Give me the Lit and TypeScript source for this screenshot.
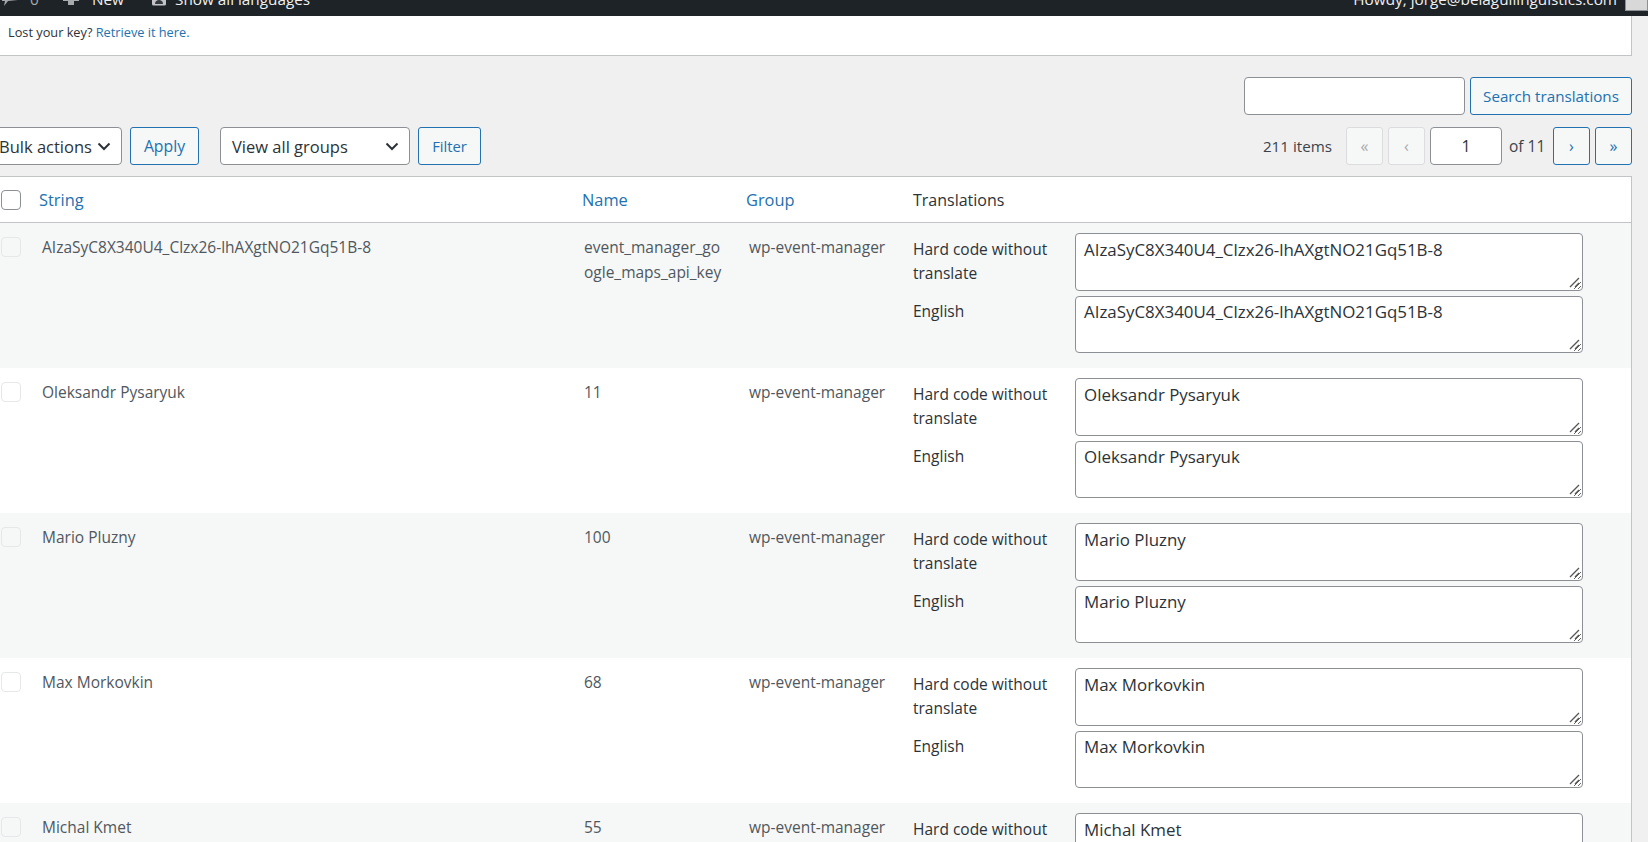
import { LitElement, html, css } from "lit";
import { customElement } from "lit/decorators.js";

const rows = [
  { s: "AIzaSyC8X340U4_Clzx26-lhAXgtNO21Gq51B-8", n: "event_manager_google_maps_api_key" },
  { s: "Oleksandr Pysaryuk", n: "11" },
  { s: "Mario Pluzny", n: "100" },
  { s: "Max Morkovkin", n: "68" },
  { s: "Michal Kmet", n: "55" },
];

@customElement("app-root")
export class AppRoot extends LitElement {
  static styles = css`
    :host {
      display: block;
      height: 842px;
      overflow: hidden;
      background: #f0f0f1;
      color: #3c434a;
      font-family: "Open Sans", "Noto Sans", sans-serif;
      font-size: 15.5px;
    }
    * { box-sizing: border-box; }
    .bar {
      height: 16px;
      background: #1d2327;
      color: #f0f0f1;
      overflow: hidden;
      display: flex;
      align-items: flex-end;
      justify-content: space-between;
      font-size: 15.3px;
      line-height: 20px;
    }
    .bar-group { display: flex; align-items: flex-end; height: 20px; flex: none; margin-bottom: 7px; }
    .bar-ico { flex: none; fill: #a7aaad; }
    .count { color: #a7aaad; margin-left: 10px; width: 31px; }
    .new { margin-left: 11px; width: 57px; }
    .lang { margin-left: 6px; }
    .howdy { margin-right: 8px; }
    .avatar { width: 23px; height: 20px; background: #d8d8d8; border: 1px solid #8c8f94; flex: none; margin-bottom: -2px; }
    .main { width: 1632px; }
    .notice {
      height: 40px;
      background: #fff;
      border-bottom: 1px solid #c3c4c7;
      border-right: 1px solid #c3c4c7;
      padding: 0 8px;
      font-size: 12.75px;
      line-height: 33px;
      color: #2c3338;
    }
    a { color: #2271b1; text-decoration: none; }
    .search { display: flex; justify-content: flex-end; gap: 5px; margin-top: 21px; height: 38px; }
    .input {
      background: #fff;
      border: 1px solid #8c8f94;
      border-radius: 4px;
      height: 38px;
    }
    .search .input { width: 221px; }
    .btn {
      height: 38px;
      border: 1px solid #2271b1;
      border-radius: 3px;
      background: #f6f7f7;
      color: #2271b1;
      display: flex;
      align-items: center;
      justify-content: center;
      flex: none;
    }
    .btn.search-btn { width: 162px; font-size: 15.2px; }
    .btn.apply { font-size: 15.8px; }
    .btn.small { font-size: 14.8px; }
    .nav { display: flex; align-items: center; height: 38px; margin-top: 12px; }
    .select {
      height: 38px;
      background: #fff;
      border: 1px solid #8c8f94;
      border-radius: 4px;
      color: #2c3338;
      font-size: 16.5px;
      display: flex;
      align-items: center;
      justify-content: space-between;
      padding: 0 10px;
      flex: none;
    }
    .select svg { flex: none; }
    .bulk { width: 133px; margin-left: -11px; padding-left: 9px; }
    .apply { width: 69px; margin-left: 8px; }
    .group { width: 190px; margin-left: 21px; padding-left: 11px; }
    .filter { width: 63px; margin-left: 8px; }
    .spacer { flex: 1; }
    .items { margin-right: 14px; font-size: 15.2px; }
    .page {
      width: 37px;
      font-size: 16px;
      margin-left: 5px;
    }
    .page.off { border-color: #dcdcde; color: #a7aaad; background: #f6f7f7; margin-left: 0; }
    .page.off + .page.off { margin-left: 5px; }
    .num {
      width: 72px;
      margin-left: 5px;
      display: flex;
      align-items: center;
      justify-content: center;
      color: #2c3338;
      font-size: 16px;
    }
    .of { margin: 0 4px 0 7px; width: 35px; white-space: nowrap; }
    .table {
      margin-top: 11px;
      background: #fff;
      border: 1px solid #c3c4c7;
      border-left: 0;
    }
    .row {
      display: grid;
      grid-template-columns: 39px 543px 164px 167px 1fr;
    }
    .head {
      height: 46px;
      border-bottom: 1px solid #c3c4c7;
      align-items: center;
      font-size: 16.4px;
    }
    .head .plain { color: #2c3338; font-size: 16px; }
    .cb {
      width: 20px;
      height: 20px;
      margin-left: 1px;
      background: #fff;
      border: 1px solid #8c8f94;
      border-radius: 4px;
    }
    .item { height: 145px; padding-top: 12px; line-height: 25px; color: #50575e; }
    .item:nth-child(even) { background: #f6f7f7; }
    .item .cb { border-color: #e6e7e8; background: transparent; margin-top: 2px; }
    .str { padding-left: 3px; white-space: nowrap; }
    .name { padding-left: 2px; padding-right: 22px; overflow-wrap: anywhere; }
    .grp { padding-left: 3px; white-space: nowrap; }
    .tr { padding-right: 48px; margin-top: -2px; }
    .tr-row { display: grid; grid-template-columns: 162px 1fr; }
    .tr-row + .tr-row { margin-top: 5px; }
    .tr-row label { padding-top: 4px; line-height: 24px; color: #2c3338; }
    .tr-row + .tr-row label { padding-top: 3px; }
    .ta-wrap { position: relative; }
    .ta {
      display: block;
      width: 100%;
      height: 58px;
      resize: vertical;
      font: 16.9px/24px "Open Sans", "Noto Sans", sans-serif;
      color: #2c3338;
      background: #fff;
      border: 1px solid #8c8f94;
      border-radius: 4px;
      padding: 4px 8px 2px;
      margin: 0;
      overflow: hidden;
    }
    .tr-row + .tr-row .ta { height: 57px; padding-top: 3px; }
    .grip { position: absolute; right: 3px; bottom: 3px; pointer-events: none; }
  `;

  render() {
    const chev = html`<svg width="14" height="14" viewBox="0 0 14 14"><path d="M1.5 4.5 7 10l5.5-5.5" fill="none" stroke="#2c3338" stroke-width="2"/></svg>`;
    const grip = html`<svg class="grip" width="11" height="11" viewBox="0 0 11 11"><path d="M1 10 10 1M6 10l4-4" stroke="#555" stroke-width="1.3" fill="none"/></svg>`;
    return html`
      <div class="bar">
        <div class="bar-group">
          <svg class="bar-ico" width="20" height="20" viewBox="0 0 20 20"><path d="M2 3h16v8l-10 1-4 5 1-5H2z"/></svg>
          <span class="count">0</span>
          <svg class="bar-ico" width="20" height="20" viewBox="0 0 20 20"><path d="M7 3h6v5h5v4h-5v4H7v-4H2V8h5z"/></svg>
          <span class="new">New</span>
          <svg width="20" height="20" viewBox="0 0 20 20"><rect x="3" y="2" width="14" height="14.5" rx="1.5" fill="#c3c4c7"/><path d="M6 15c0-3 2-4 4-4s4 1 4 4zM8 4h4v4a2 2 0 0 1-4 0z" fill="#33393e"/></svg>
          <span class="lang">Show all languages</span>
        </div>
        <div class="bar-group">
          <span class="howdy">Howdy, jorge@belaguilinguistics.com</span>
          <div class="avatar"></div>
        </div>
      </div>
      <div class="main">
        <div class="notice">Lost your key? <a>Retrieve it here.</a></div>
        <div class="search">
          <div class="input"></div>
          <div class="btn search-btn">Search translations</div>
        </div>
        <div class="nav">
          <div class="select bulk"><span>Bulk actions</span>${chev}</div>
          <div class="btn apply">Apply</div>
          <div class="select group"><span>View all groups</span>${chev}</div>
          <div class="btn filter small">Filter</div>
          <div class="spacer"></div>
          <span class="items">211 items</span>
          <div class="btn page off">«</div>
          <div class="btn page off">‹</div>
          <div class="input num">1</div>
          <span class="of">of 11</span>
          <div class="btn page">›</div>
          <div class="btn page">»</div>
        </div>
        <div class="table">
          <div class="row head">
            <div class="cb"></div>
            <a>String</a><a>Name</a><a>Group</a>
            <span class="plain">Translations</span>
          </div>
          ${rows.map(
            (r) => html`
              <div class="row item">
                <div class="cb"></div>
                <div class="str">${r.s}</div>
                <div class="name">${r.n}</div>
                <div class="grp">wp-event-manager</div>
                <div class="tr">
                  <div class="tr-row">
                    <label>Hard code without translate</label>
                    <div class="ta-wrap"><textarea class="ta" .value=${r.s}></textarea>${grip}</div>
                  </div>
                  <div class="tr-row">
                    <label>English</label>
                    <div class="ta-wrap"><textarea class="ta" .value=${r.s}></textarea>${grip}</div>
                  </div>
                </div>
              </div>
            `
          )}
        </div>
      </div>
    `;
  }
}
